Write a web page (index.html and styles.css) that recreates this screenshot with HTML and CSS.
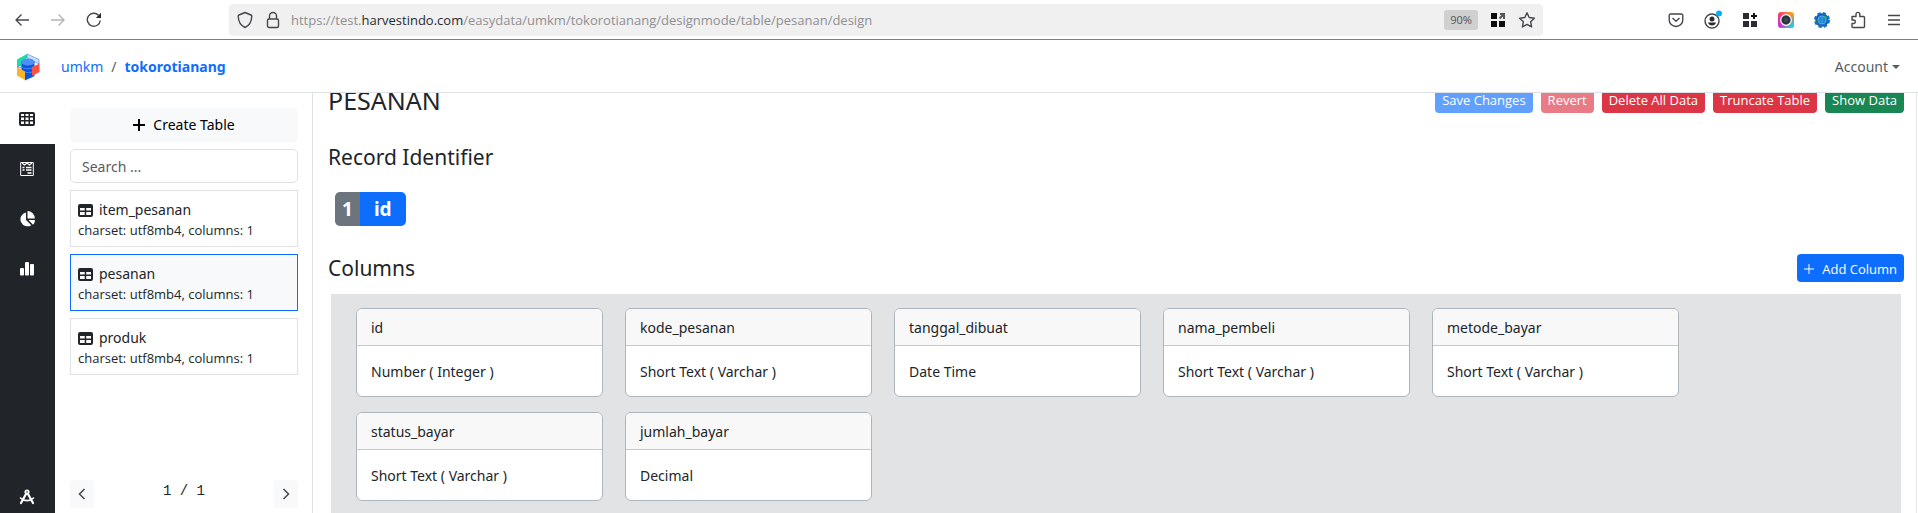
FILE: index.html
```html
<!DOCTYPE html>
<html lang="id">
<head>
<meta charset="utf-8">
<title>tokorotianang - pesanan</title>
<link rel="stylesheet" href="styles.css">
</head>
<body>
<header class="browser">
  <div class="browser-nav">
    <button class="tool" aria-label="Back"><svg width="16" height="16" viewBox="0 0 16 16"><path d="M15 8H2M7.500 2.500 2 8l5.500 5.500"/></svg></button>
    <button class="tool tool-off" aria-label="Forward" disabled><svg width="16" height="16" viewBox="0 0 16 16"><path d="M1 8h13M8.500 2.500 14 8l-5.500 5.500"/></svg></button>
    <button class="tool" aria-label="Reload"><svg width="16" height="16" viewBox="0 0 16 16"><path d="M14.300 8.500A6.500 6.500 0 1 1 12.500 3.200"/><path class="solid" d="M15 .8V6H9.800z"/></svg></button>
  </div>
  <div class="urlbar">
    <svg class="line" width="16" height="18" viewBox="0 0 16 18"><path d="M8 1.500 14 4c.6.300.8.700.8 1.300C14.600 11 12.500 14.500 8 16.500 3.500 14.500 1.400 11 1.200 5.300 1.200 4.700 1.400 4.300 2 4z"/></svg>
    <svg class="line" width="14" height="18" viewBox="0 0 14 18"><rect x="1.500" y="8" width="11" height="8.500" rx="1.500"/><path d="M3.500 8V5a3.500 3.500 0 0 1 7 0v3"/></svg>
    <span class="url">https://test.<b>harvestindo.com</b>/easydata/umkm/tokorotianang/designmode/table/pesanan/design</span>
    <span class="zoom">90%</span>
    <svg class="ext" width="16" height="16" viewBox="0 0 16 16"><path d="M1 1h6v6H1zM1 9h6v6H1zM9 9h6v6H9z"/><path class="arrow" d="M10 2h4v5M14 2 9.500 6.500"/></svg>
    <svg class="line" width="18" height="18" viewBox="0 0 18 18"><path d="m9 1.800 2.200 4.700 5.200.7-3.800 3.500 1 5.200L9 13.400l-4.600 2.500 1-5.200L1.600 7.200l5.200-.7z"/></svg>
  </div>
  <div class="browser-tools">
    <button class="tool" aria-label="Pocket"><svg width="16" height="16" viewBox="0 0 16 16"><path d="M2.500 2h11a1.300 1.300 0 0 1 1.300 1.300V8A6.800 6.500 0 0 1 1.200 8V3.300A1.300 1.300 0 0 1 2.500 2z"/><path d="m4.500 6 3.500 3.300L11.500 6"/></svg></button>
    <button class="tool" aria-label="Profile"><svg width="18" height="20" viewBox="0 0 18 20"><circle cx="8" cy="11" r="7"/><circle class="solid" cx="8" cy="9" r="2.500"/><path class="solid" d="M4 12.500h8c-.5 2-2 3-4 3s-3.500-1-4-3z"/><circle class="dot" cx="15" cy="3.500" r="3"/></svg></button>
    <button class="tool" aria-label="Add-on grid"><svg width="16" height="16" viewBox="0 0 16 16"><path class="solid" d="M1 1h6v6H1zM1 9h6v6H1zM9 9h6v6H9z"/><path class="plus" d="M12 1v6M9 4h6"/></svg></button>
    <button class="tool" aria-label="Camera"><svg width="16" height="16" viewBox="0 0 16 16"><defs><linearGradient id="cam" x1="0" y1="1" x2="1" y2="0"><stop offset="0" stop-color="#b52cff"/><stop offset=".5" stop-color="#ff3c6e"/><stop offset="1" stop-color="#ffb800"/></linearGradient><linearGradient id="cam2" x1="0" y1="0" x2="1" y2="1"><stop offset=".5" stop-color="#14d8e8" stop-opacity="0"/><stop offset=".9" stop-color="#14d8e8"/></linearGradient></defs><rect width="16" height="16" rx="3" fill="url(#cam)" stroke="none"/><rect width="16" height="16" rx="3" fill="url(#cam2)" stroke="none"/><circle cx="8" cy="8" r="5.300" fill="#37474f" stroke="#fff" stroke-width="1.200"/><circle cx="8" cy="8" r="3.300" fill="#37474f" stroke="#1c262c" stroke-width="1"/></svg></button>
    <button class="tool" aria-label="Globe"><svg width="16" height="16" viewBox="0 0 16 16"><circle cx="8" cy="8" r="6" fill="#0a72d0"/><circle cx="8" cy="8" r="6.500" fill="none" stroke="#0a72d0" stroke-width="3" stroke-dasharray="3.100 2"/><circle cx="8" cy="8" r="4" stroke="#6ab6f5" fill="none" stroke-width=".8"/><path d="M4 8h8M8 4v8M5 6h6M5 10h6" stroke="#58a8ee" stroke-width=".7"/><path d="M10 5h2v2M4 9h2" stroke="#1fb86a"/></svg></button>
    <button class="tool" aria-label="Extensions"><svg width="16" height="18" viewBox="0 0 16 18"><path d="M2 5.500h4V3.300a1.900 1.900 0 0 1 3.800 0v2.200h3.700c.6 0 1 .4 1 1v9c0 .6-.4 1-1 1H3c-.6 0-1-.4-1-1v-3h2a1.800 1.800 0 0 0 0-3.500H2z"/></svg></button>
    <button class="tool" aria-label="Menu"><svg width="14" height="12" viewBox="0 0 14 12"><path d="M1 1.500h12M1 6h12M1 10.500h12"/></svg></button>
  </div>
</header>

<nav class="navbar">
  <a class="brand" href="#" aria-label="Home"><svg width="24" height="28" viewBox="0 0 24 28"><path fill="#12e0a8" d="M1 6.500 11 1v4L6 8.500V12l-5 2.500z"/><path fill="#cfe0ff" stroke="#3b78d8" stroke-width=".6" d="m11 1 12 5.500V11l-4-2-8-4zM1 14l3-1.500L9 15v1z"/><path fill="#0a56e0" d="M5.500 8.500h13V23L13 25.500l-7.500-3z"/><path fill="#0a56e0" d="M9 24v3.500l9-4.500v-2z"/><ellipse cx="12" cy="9" rx="6.700" ry="3.600" fill="#4f8ef5"/><path stroke="#3f86f8" fill="none" d="M5.500 13.500c2 3 11 3 13 0M8 18.500c2 1.500 7 1.500 9 0"/><path fill="#ffb128" d="m1 14 8 4.500V27l-8-4.500z"/><path fill="#ff5040" d="m16 14 7.500-3.500v8.500L16 23z"/></svg></a>
  <a href="#">umkm</a><span>/</span><a class="current" href="#">tokorotianang</a>
  <button class="account">Account</button>
</nav>

<div class="workspace">
  <nav class="rail">
    <a class="rail-item active" href="#" aria-label="Tables"><svg width="16" height="14" viewBox="0 0 16 14"><path fill-rule="evenodd" d="M2 0h12a2 2 0 0 1 2 2v10a2 2 0 0 1-2 2H2a2 2 0 0 1-2-2V2a2 2 0 0 1 2-2zM2 2v2h3V2zm4.500 0v2h3V2zM11 2v2h3V2zM2 5.500v2.500h3V5.500zm4.500 0v2.500h3V5.500zm4.500 0v2.500h3V5.500zM2 9.500V12h3V9.500zm4.500 0V12h3V9.500zm4.500 0V12h3V9.500z"/></svg></a>
    <a class="rail-item" href="#" aria-label="Forms"><svg width="14" height="14" viewBox="0 0 14 14"><path fill="none" stroke="currentColor" d="M.7.500h12.600v13H.7z"/><path fill="none" stroke="currentColor" d="m2 1 2.500 2L7 1l2.500 2L12 1M2.500 5.500h2M6 5.500h5.500M2.500 8h2M6 8h5.500M7.500 11h4" stroke-width="1.300"/></svg></a>
    <a class="rail-item" href="#" aria-label="Reports"><svg width="16" height="16" viewBox="0 0 16 16"><path d="M7 1.500V9l5.300 5.200A7 7 0 1 1 7 1.500zM8.500 0A7.500 7.500 0 0 1 15.800 7.500H8.500zM9.500 9H16a7 7 0 0 1-2 4.800z"/></svg></a>
    <a class="rail-item" href="#" aria-label="Charts"><svg width="14" height="14" viewBox="0 0 14 14"><rect y="6" width="4" height="7.500" rx="1"/><rect x="5" y="0" width="4" height="13.500" rx="1"/><rect x="10" y="2" width="4" height="11.500" rx="1"/></svg></a>
    <a class="rail-item rail-end" href="#" aria-label="Design"><svg width="16" height="16" viewBox="0 0 16 16"><g fill="none" stroke="currentColor" stroke-width="2.200" stroke-linecap="round"><circle cx="8" cy="3" r="1.700" stroke-width="1.800"/><path d="M7 5 2 14M9 5l5 9" /><path d="M1.500 9c3.500 3.500 9.500 3.500 13 0" stroke-width="1.600"/></g></svg></a>
  </nav>

  <aside class="sidebar">
    <button class="create"><svg width="12" height="12" viewBox="0 0 12 12"><path d="M6 0v12M0 6h12"/></svg>Create Table</button>
    <input class="search" type="search" aria-label="Search tables" placeholder="Search ...">
    <a class="table-item" href="#"><span class="table-name"><svg width="15" height="13" viewBox="0 0 15 13"><path fill-rule="evenodd" d="M2 0h11a2 2 0 0 1 2 2v9a2 2 0 0 1-2 2H2a2 2 0 0 1-2-2V2a2 2 0 0 1 2-2zM2 4v2.500h4.700V4zm6.200 0v2.500H13V4zM2 8v3h4.700V8zm6.200 0v3H13V8z"/></svg>item_pesanan</span><small>charset: utf8mb4, columns: 1</small></a>
    <a class="table-item selected" href="#"><span class="table-name"><svg width="15" height="13" viewBox="0 0 15 13"><path fill-rule="evenodd" d="M2 0h11a2 2 0 0 1 2 2v9a2 2 0 0 1-2 2H2a2 2 0 0 1-2-2V2a2 2 0 0 1 2-2zM2 4v2.500h4.700V4zm6.200 0v2.500H13V4zM2 8v3h4.700V8zm6.200 0v3H13V8z"/></svg>pesanan</span><small>charset: utf8mb4, columns: 1</small></a>
    <a class="table-item" href="#"><span class="table-name"><svg width="15" height="13" viewBox="0 0 15 13"><path fill-rule="evenodd" d="M2 0h11a2 2 0 0 1 2 2v9a2 2 0 0 1-2 2H2a2 2 0 0 1-2-2V2a2 2 0 0 1 2-2zM2 4v2.500h4.700V4zm6.200 0v2.500H13V4zM2 8v3h4.700V8zm6.200 0v3H13V8z"/></svg>produk</span><small>charset: utf8mb4, columns: 1</small></a>
    <div class="pager">
      <button aria-label="Previous page"><svg width="8" height="12" viewBox="0 0 8 12"><path d="M6.500 1 1.500 6l5 5"/></svg></button>
      <span>1 / 1</span>
      <button aria-label="Next page"><svg width="8" height="12" viewBox="0 0 8 12"><path d="m1.500 1 5 5-5 5"/></svg></button>
    </div>
  </aside>

  <main class="main">
    <div class="content">
      <div class="title-row">
        <h1>PESANAN</h1>
        <div class="actions">
          <button class="btn primary" disabled>Save Changes</button>
          <button class="btn danger" disabled>Revert</button>
          <button class="btn danger">Delete All Data</button>
          <button class="btn danger">Truncate Table</button>
          <button class="btn success">Show Data</button>
        </div>
      </div>
      <h2>Record Identifier</h2>
      <div class="identifier"><span class="order">1</span><span class="key">id</span></div>
      <div class="columns-row">
        <h2>Columns</h2>
        <button class="btn primary add"><svg width="10" height="10" viewBox="0 0 10 10"><path d="M5 0v10M0 5h10"/></svg>Add Column</button>
      </div>
      <div class="columns">
        <article class="card"><h3>id</h3><p>Number ( Integer )</p></article>
        <article class="card"><h3>kode_pesanan</h3><p>Short Text ( Varchar )</p></article>
        <article class="card"><h3>tanggal_dibuat</h3><p>Date Time</p></article>
        <article class="card"><h3>nama_pembeli</h3><p>Short Text ( Varchar )</p></article>
        <article class="card"><h3>metode_bayar</h3><p>Short Text ( Varchar )</p></article>
        <article class="card"><h3>status_bayar</h3><p>Short Text ( Varchar )</p></article>
        <article class="card"><h3>jumlah_bayar</h3><p>Decimal</p></article>
      </div>
    </div>
  </main>
</div>
</body>
</html>
```
FILE: styles.css
```css
* { box-sizing: border-box; }

body {
  margin: 0;
  height: 100vh;
  display: flex;
  flex-direction: column;
  overflow: hidden;
  background: #fff;
  color: #212529;
  font: 14px/22px "Noto Sans", sans-serif;
}

button, input { font: inherit; }
button { border: 0; padding: 0; background: none; color: inherit; }
a { color: inherit; text-decoration: none; }
svg { display: block; flex: none; }
h1, h2, h3, p { margin: 0; font-weight: 400; }

/* Browser toolbar */
.browser {
  flex: none;
  height: 40px;
  display: flex;
  align-items: center;
  border-bottom: 1px solid #7d7d80;
}
.browser-nav { width: 229px; display: flex; gap: 20px; padding-left: 14px; }
.tool { height: 20px; min-width: 16px; display: flex; align-items: center; justify-content: center; }
.tool svg, .line { fill: none; stroke: #46464c; stroke-width: 1.4; stroke-linejoin: round; }
.tool .solid { fill: #2b2b30; stroke: none; }
.tool .plus { stroke: #111; stroke-width: 2; }
.tool .dot { fill: #00b3f4; stroke: none; }
.tool-off { opacity: .4; }
.urlbar {
  flex: 1;
  height: 32px;
  display: flex;
  align-items: center;
  padding: 0 7px 0 8px;
  border-radius: 4px;
  background: #f0f0f0;
}
.urlbar .line + .line { margin-left: 13px; }
.url { flex: 1; margin-left: 11px; font-family: "Open Sans", sans-serif; font-size: 13px; color: #8f8f93; }
.url b { font-weight: 400; color: #2b2b30; }
.zoom {
  width: 34px;
  line-height: 20px;
  border-radius: 3px;
  background: #d0d0d0;
  color: #5b5b60;
  font-size: 11px;
  text-align: center;
}
.ext { margin: 0 12px; fill: #0c0c0d; }
.ext .arrow { fill: none; stroke: #555; stroke-width: 2; }
.browser-tools { width: 375px; display: flex; justify-content: flex-end; gap: 20px; padding-right: 16px; }

/* Application bar */
.navbar {
  flex: none;
  height: 53px;
  display: flex;
  align-items: center;
  gap: 8px;
  padding: 2px 18px 0 16px;
  border-bottom: 1px solid #dee2e6;
  color: #0d6efd;
}
.navbar span { color: #595c5f; }
.brand { margin-right: 13px; }
.current { font-weight: 700; }
.account { display: flex; align-items: center; gap: 4px; margin-left: auto; color: #595c5f; }
.account::after { content: ""; border: 4px solid transparent; border-top-color: #595c5f; border-bottom: 0; }

.workspace { flex: 1; min-height: 0; display: flex; }

/* Icon rail */
.rail { flex: none; width: 55px; display: flex; flex-direction: column; background: #212529; }
.rail-item { height: 50px; display: flex; align-items: center; justify-content: center; padding-right: 2px; color: #fff; fill: currentColor; }
.rail-item.active { height: 51px; background: #fff; color: #212529; }
.rail-end { height: 32px; margin-top: auto; }

/* Table list */
.sidebar {
  flex: none;
  width: 258px;
  display: flex;
  flex-direction: column;
  gap: 7px;
  padding: 15px 14px 5px 15px;
  border-right: 1px solid #dee2e6;
}
.create {
  height: 34px;
  display: flex;
  align-items: center;
  justify-content: center;
  gap: 8px;
  border-radius: 5px;
  background: #f8f9fa;
  color: #000;
}
.create svg { stroke: #000; stroke-width: 2; }
.search { height: 34px; padding: 0 11px; border: 1px solid #dee2e6; border-radius: 5px; outline: 0; }
.search::placeholder { color: #595c5f; opacity: 1; }
.table-item { height: 57px; display: flex; flex-direction: column; padding: 8px 7px; border: 1px solid #dee2e6; }
.selected { border-color: #0d6efd; background: #f8f9fa; }
.table-name { display: flex; align-items: center; gap: 6px; fill: #212529; }
.table-item small { font-family: "Open Sans", sans-serif; font-size: 13px; line-height: 18px; }
.pager { display: flex; justify-content: space-between; margin-top: auto; }
.pager button {
  width: 24px;
  height: 28px;
  display: flex;
  align-items: center;
  justify-content: center;
  border-radius: 3px;
  background: #f8f9fa;
}
.pager svg { fill: none; stroke: #4a4d50; stroke-width: 1.6; }
.pager span { font: 14px/22px "Liberation Mono", monospace; }

/* Designer, scrolled slightly below its top edge */
.main { flex: 1; min-width: 0; overflow: hidden; padding: 0 12px 0 15px; border-right: 1px solid #e6e8ea; margin-right: 1px; }
.content { margin-top: -8px; }
.title-row, .columns-row { display: flex; justify-content: space-between; align-items: center; }
.title-row { height: 32px; margin-bottom: 24px; align-items: flex-start; }
h1 { font-size: 25px; line-height: 30px; }
h2 { font-size: 21px; line-height: 32px; }
.actions { display: flex; gap: 8px; }
.btn { height: 28px; padding: 2px 7px 0; border-radius: 4px; color: #fff; font-family: "Open Sans", sans-serif; font-size: 13px; }
.btn:disabled { opacity: .65; }
.primary { background: #0d6efd; }
.danger { background: #dc3545; }
.success { background: #198754; }
.add { display: flex; align-items: center; gap: 8px; }
.add svg { stroke: #fff; }
.identifier { display: flex; margin: 19px 7px 26px; font-weight: 700; font-size: 19px; line-height: 34px; color: #fff; }
.order { padding: 0 7px; border-radius: 5px 0 0 5px; background: #6c757d; }
.key { padding: 0 14px; border-radius: 0 5px 5px 0; background: #0d6efd; }
.columns {
  display: flex;
  flex-wrap: wrap;
  gap: 15px 22px;
  margin: 10px 3px 0;
  padding: 14px 25px;
  background: #e2e3e5;
}
.card { width: 247px; border: 1px solid #adb5bd; border-radius: 6px; background: #fff; overflow: hidden; }
.card h3 { padding: 8px 14px 6px; border-bottom: 1px solid #c8c9ca; background: #f8f8f8; font-size: 14px; line-height: 22px; }
.card p { padding: 15px 14px 13px; }
```
